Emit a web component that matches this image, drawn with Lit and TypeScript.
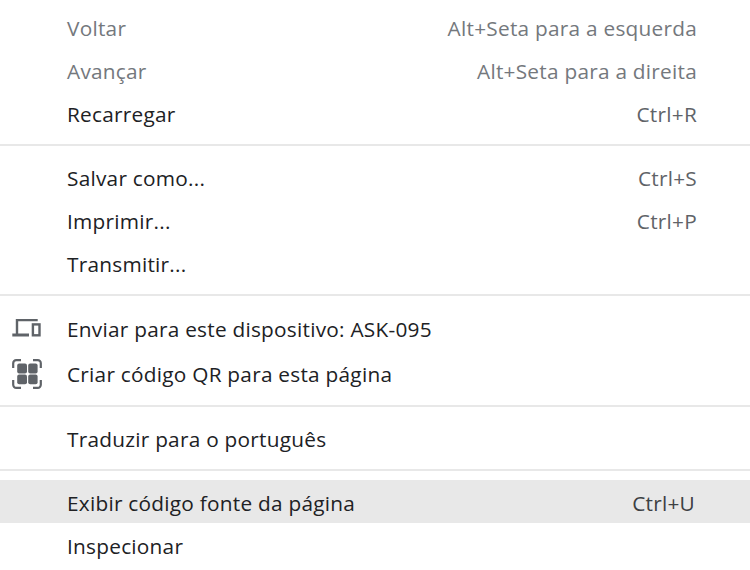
import { LitElement, html, css, svg } from "lit";
import { customElement } from "lit/decorators.js";

type Row = { label: string; key?: string; off?: boolean; hot?: boolean; icon?: "device" | "qr"; tall?: boolean };

const groups: Row[][] = [
  [
    { label: "Voltar", key: "Alt+Seta para a esquerda", off: true },
    { label: "Avançar", key: "Alt+Seta para a direita", off: true },
    { label: "Recarregar", key: "Ctrl+R" },
  ],
  [
    { label: "Salvar como...", key: "Ctrl+S" },
    { label: "Imprimir...", key: "Ctrl+P" },
    { label: "Transmitir..." },
  ],
  [
    { label: "Enviar para este dispositivo: ASK-095", icon: "device", tall: true },
    { label: "Criar código QR para esta página", icon: "qr", tall: true },
  ],
  [{ label: "Traduzir para o português" }],
  [
    { label: "Exibir código fonte da página", key: "Ctrl+U", hot: true },
    { label: "Inspecionar" },
  ],
];

const deviceIcon = svg`<svg class="icon" viewBox="0 0 30 20" width="30" height="20" fill="none" stroke="#5f6368" stroke-width="2.4">
  <path d="M5 15V1H25.7" />
  <path d="M0.3 16H17" stroke-width="3" />
  <rect x="20.9" y="5.4" width="6.6" height="10.9" />
</svg>`;

const qrIcon = svg`<svg class="icon" viewBox="0 0 30 30" width="30" height="30" fill="none" stroke="#5f6368" stroke-width="2.2">
  <path d="M1.2 9V4.2a3 3 0 0 1 3-3H9M21 1.2h4.8a3 3 0 0 1 3 3V9M28.8 21v4.8a3 3 0 0 1-3 3H21M9 28.8H4.2a3 3 0 0 1-3-3V21" />
  <g fill="#5f6368" stroke="none">
    <rect x="5.2" y="4.6" width="9.8" height="9.8" rx="2" />
    <rect x="16.2" y="4.6" width="9.4" height="9.8" rx="2" />
    <rect x="5.2" y="15.6" width="9.8" height="9.6" rx="2" />
    <rect x="16.2" y="15.6" width="9.4" height="9.6" rx="2" />
  </g>
</svg>`;

@customElement("app-root")
export class AppRoot extends LitElement {
  static styles = css`
    :host {
      display: block;
      width: 750px;
      height: 570px;
      overflow: hidden;
      background: #fff;
      font-family: "Open Sans", "Noto Sans", sans-serif;
      font-size: 20.8px;
      letter-spacing: 0.25px;
      color: #202124;
    }
    .menu {
      padding-top: 6px;
    }
    .group {
      display: flex;
      flex-direction: column;
      padding: 0 0 9px;
    }
    .group + .group {
      border-top: 2px solid #e8e8e8;
      padding-top: 10px;
    }
    .group.last {
      padding-top: 9px;
    }
    .row {
      display: flex;
      align-items: center;
      box-sizing: border-box;
      height: 43px;
      padding: 0 53px 0 67px;
      position: relative;
      white-space: nowrap;
    }
    .group.last .row {
      padding-top: 3px;
    }
    .row.tall {
      height: 45px;
    }
    .row.off {
      color: #74787d;
    }
    .row.hot {
      background: #e8e8e8;
      padding-right: 55px;
    }
    .label {
      flex: 1;
    }
    .slot {
      position: absolute;
      left: 12px;
      top: 0;
      bottom: 0;
      width: 30px;
      display: flex;
      align-items: center;
      justify-content: center;
    }
    .key {
      color: #5f6368;
    }
    .row.off .key {
      color: #74787d;
    }
    .row.hot .key {
      color: #3c4043;
    }
  `;

  render() {
    return html`<div class="menu">
      ${groups.map(
        (g, i) => html`<div class="group ${i === groups.length - 1 ? "last" : ""}">
          ${g.map(
            (r) => html`<div class="row ${r.off ? "off" : ""} ${r.hot ? "hot" : ""} ${r.tall ? "tall" : ""}">
              ${r.icon ? html`<span class="slot">${r.icon === "device" ? deviceIcon : qrIcon}</span>` : ""}
              <span class="label">${r.label}</span>
              ${r.key ? html`<span class="key">${r.key}</span>` : ""}
            </div>`
          )}
        </div>`
      )}
    </div>`;
  }
}
